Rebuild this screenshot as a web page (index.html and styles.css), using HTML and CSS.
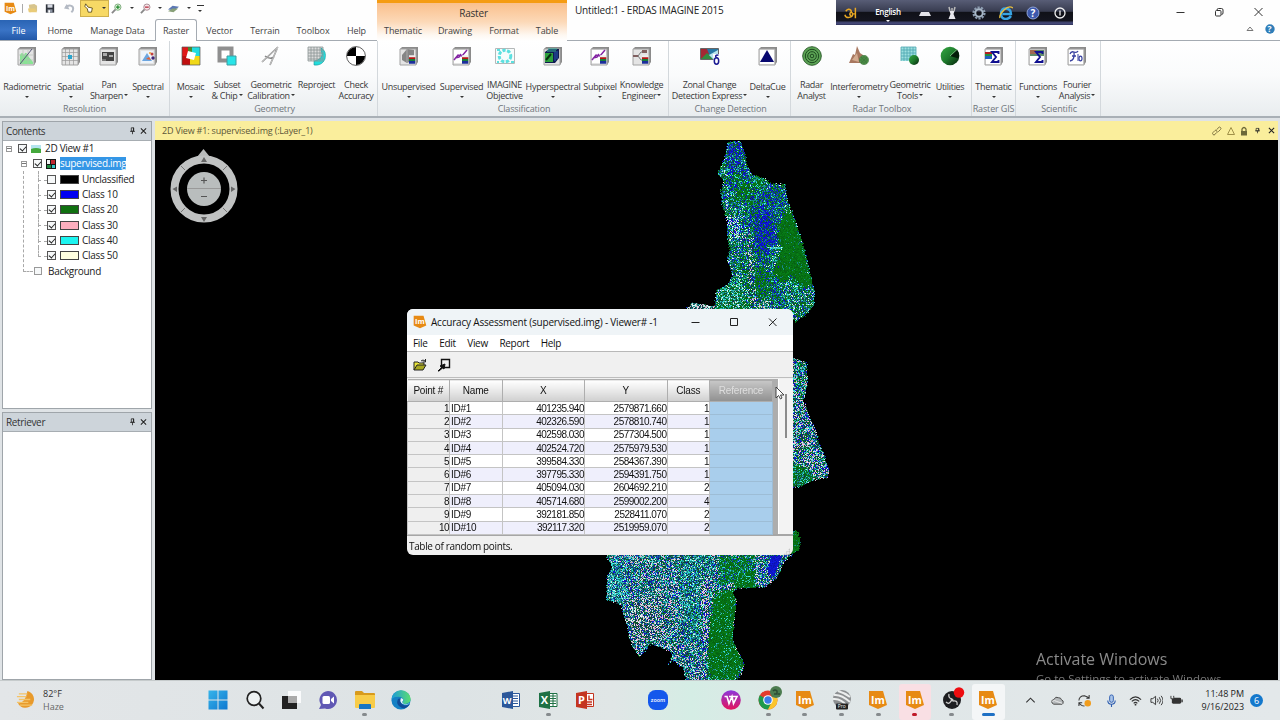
FILE: index.html
```html
<!DOCTYPE html>
<html lang="en">
<head>
    <meta charset="UTF-8">
    <meta name="viewport" content="width=device-width, initial-scale=1.0">
    <title>Untitled:1 - ERDAS IMAGINE 2015</title>
    <link rel="stylesheet" href="styles.css">
</head>
<body>

    <!-- Shared icons -->
    <svg class="sprite" width="0" height="0">
        <defs>
            <linearGradient id="blueTile" x1="0" y1="0" x2="1" y2="1"><stop offset="0" stop-color="#35b4ea"/><stop offset="1" stop-color="#0f78d0"/></linearGradient>
            <linearGradient id="edgeTop" x1="0" y1="0" x2="1" y2="0"><stop offset="0" stop-color="#1c9ad8"/><stop offset="1" stop-color="#5ade72"/></linearGradient>
            <linearGradient id="wpsFill" x1="0" y1="0" x2="0" y2="1"><stop offset="0" stop-color="#8c38dc"/><stop offset="1" stop-color="#e4145c"/></linearGradient>
            <linearGradient id="darkGreen" x1="0" y1="0" x2="1" y2="1"><stop offset="0" stop-color="#36a844"/><stop offset=".5" stop-color="#1e7a2c"/><stop offset="1" stop-color="#04200a"/></linearGradient>
        </defs>
        <symbol id="im" viewBox="0 0 20 20">
            <path d="M1 1h14l4 14-9 4-9-4z" fill="#e78a14"/>
            <text x="3" y="13.5" font-family="Open Sans, sans-serif" font-size="10.5" font-weight="bold" fill="#fff">Im</text>
        </symbol>
        <symbol id="slab" viewBox="0 0 20 20">
            <path d="M1 3l2-2h16v15l-2 3H1z" fill="#8b8b8b"/>
            <path d="M1 3h16v16H1z" fill="#e4e4e4" stroke="#a2a2a2"/>
        </symbol>
        <symbol id="rgb" viewBox="0 0 7 9">
            <path d="M0 0h7v9H0z" fill="#eee"/><path d="M0 2h7v2H0z" fill="#b51414"/><path d="M0 4h7v2H0z" fill="#18803a"/><path d="M0 6h7v3H0z" fill="#1c2e9c"/>
        </symbol>
        <symbol id="rings" viewBox="0 0 20 20">
            <circle cx="10" cy="10" r="9.3" fill="#5ca455" stroke="#315f30"/>
            <g fill="none" stroke="#1e4a20"><circle cx="10" cy="10" r="6.7"/><circle cx="10" cy="10" r="4.3"/><circle cx="10" cy="10" r="1.8"/></g>
        </symbol>
        <symbol id="pin" viewBox="0 0 8 10"><path d="M2.5 1h3v4.2h-3zM1 5.5h6M4 5.5V9" fill="none" stroke="#222"/><path d="M4.6 1h1.2v4H4.6z" fill="#222"/></symbol>
        <symbol id="x" viewBox="0 0 8 8"><path d="M1 1l6 6M7 1L1 7" fill="none" stroke="#222" stroke-width="1.2"/></symbol>
    </svg>

    <!-- Title bar and ribbon tabs -->
    <header class="titlebar">
        <div class="title-left">
            <div class="quick">
                <svg class="q-app" viewBox="0 0 20 20"><use href="#im"/></svg>
                <i class="q-sep"></i>
                <svg class="q-icon q-open" viewBox="0 0 12 12"><path d="M2 2l6-1 3 2v6l-8 1z" fill="#d7c48c"/><path d="M1 6h8l2 4H2z" fill="#e9cb78"/></svg>
                <svg class="q-icon q-save" viewBox="0 0 12 12"><path d="M1 1h10v10H1z" fill="#30343c"/><path d="M3 1h6v4H3z" fill="#d6dae2"/><path d="M3 7h6v4H3z" fill="#8c94a2"/><path d="M4 8h2v3H4z" fill="#fff"/></svg>
                <svg class="q-icon q-undo" viewBox="0 0 12 12"><path d="M2 5c3-4 8-2 8 1s-1 3-2 4" fill="none" stroke="#b4bac4" stroke-width="2.200"/><path d="M0 6l3-5 3 6z" fill="#b4bac4"/></svg>
                <span class="q-active">
                    <svg viewBox="0 0 12 12"><path d="M2 1l3 4 5 1-1 5H5L4 7 1 4z" fill="#fff" stroke="#54440c"/></svg>
                    <b class="caret"></b>
                </span>
                <svg class="q-icon q-zin" viewBox="0 0 12 12"><path d="M5 7L1 11" stroke="#888" stroke-width="2"/><circle cx="7.5" cy="4.5" r="3.4" fill="#dff2dc" stroke="#79a878"/><path d="M5.5 4.500h4M7.500 2.500v4" stroke="#208a2c" stroke-width="1.300"/></svg>
                <b class="caret"></b>
                <svg class="q-icon q-zout" viewBox="0 0 12 12"><path d="M5 7L1 11" stroke="#888" stroke-width="2"/><circle cx="7.5" cy="4.5" r="3.4" fill="#f8e4e8" stroke="#a48890"/><path d="M5.500 4.500h4" stroke="#b01c30" stroke-width="1.300"/></svg>
                <b class="caret"></b>
                <svg class="q-icon q-layer" viewBox="0 0 12 12"><path d="M0 7l5-4 7 1-5 4z" fill="#5c78b4"/><path d="M0 9l5-3 6 0-5 4z" fill="#88a078"/></svg>
                <b class="caret"></b>
                <span class="q-more"><b class="caret"></b></span>
            </div>
            <nav class="tabs">
                <a class="tab file">File</a>
                <a class="tab">Home</a>
                <a class="tab manage">Manage Data</a>
                <a class="tab active">Raster</a>
                <a class="tab">Vector</a>
                <a class="tab">Terrain</a>
                <a class="tab">Toolbox</a>
                <a class="tab">Help</a>
            </nav>
        </div>
        <div class="context">
            <div class="context-name">Raster</div>
            <nav class="context-tabs">
                <a class="tab">Thematic</a>
                <a class="tab">Drawing</a>
                <a class="tab">Format</a>
                <a class="tab">Table</a>
            </nav>
        </div>
        <div class="title-right">
            <span class="app-title">Untitled:1 - ERDAS IMAGINE 2015</span>
            <div class="win-side">
                <svg class="win-buttons" viewBox="0 0 100 20"><g fill="none" stroke="#333"><path d="M6.500 12.500h8M84.500 8l8 8M92.500 8l-8 8"/><rect x="45.500" y="10.500" width="5.500" height="5.500" rx="1"/><path d="M47 10q0-1.500 1.500-1.500h3q1.500 0 1.500 1.500v3q0 1.500-1.500 1.500"/></g></svg>
                <svg class="help-buttons" viewBox="0 0 40 20"><path d="M7 10.500l3-3.500 3 3.500z" fill="#fff" stroke="#777"/><circle cx="30" cy="9" r="4.700" fill="#2f7db8"/><text x="27.600" y="12.200" font-family="Open Sans" font-weight="bold" font-size="8.500" fill="#fff">?</text></svg>
            </div>
        </div>
    </header>

    <!-- Floating keyboard bar -->
    <div class="langbar">
        <svg class="l-logo" viewBox="0 0 16 16"><path d="M1 10q1 4 5 3 4-1 4-4-1-3-3-1-1 2 1 3M2 6q3-4 6-1 1 2-1 3M13 2v12M10 9h3" fill="none" stroke="#e8a824" stroke-width="1.700"/></svg>
        <span class="l-name">English<b class="caret"></b></span>
        <svg viewBox="0 0 14 14"><path d="M3 6h8l2 4H1z" fill="#e4e4ea"/></svg>
        <svg viewBox="0 0 14 14"><path d="M4.500 5h5l-1 3 2 5h-7l2-5z" fill="#e8e8ee"/><path d="M5 5L4 1M7 5V2M9 5l1-4" stroke="#bbb" stroke-width="1.500"/></svg>
        <svg viewBox="0 0 14 14"><circle cx="7" cy="7" r="5.500" fill="none" stroke="#8c9cb0" stroke-width="2.200" stroke-dasharray="2.200 1.200"/><circle cx="7" cy="7" r="3.700" fill="none" stroke="#a8b8c8" stroke-width="2"/></svg>
        <svg viewBox="0 0 14 14"><path d="M12 10q-2 3-5 3-5 0-5-5.500T7 2.500t5 5.500H3.500" fill="none" stroke="#38a4e4" stroke-width="2.400"/><path d="M1 12Q0 9 5 4t9-2" fill="none" stroke="#e8c040" stroke-width="1.400"/></svg>
        <svg viewBox="0 0 14 14"><circle cx="7" cy="7" r="6" fill="#3c58ac" stroke="#8ea2d6"/><text x="4.500" y="10.700" font-family="Open Sans" font-size="10" font-weight="bold" fill="#fff">?</text></svg>
        <svg viewBox="0 0 14 14"><circle cx="7" cy="7" r="5" fill="none" stroke="#f0f0f0" stroke-width="1.300"/><path d="M7 4.500v5" stroke="#f0f0f0" stroke-width="1.300"/></svg>
    </div>

    <!-- Ribbon -->
    <section class="ribbon">
        <div class="group resolution">
            <div class="tools">
                <div class="tool one"><svg viewBox="0 0 20 20"><use href="#slab"/><path d="M3 18V9q2-4 4 0 2-5 4 1l5 6v2z" fill="#88e494"/><path d="M6 4v14M11 4v14M2 9h14M2 14h14" stroke="#b4bcb4" stroke-width=".6"/><path d="M3 18L15 3" stroke="#557" /></svg><span>Radiometric</span><b class="caret"></b></div>
                <div class="tool one"><svg viewBox="0 0 20 20"><use href="#slab"/><path d="M4.500 3v16M8.500 3v16M12.500 3v16M1 6.500h16M1 10.500h16M1 14.500h16" stroke="#999" stroke-width=".7"/><path d="M7 9h4v4H7z" fill="#2aa4cc"/></svg><span>Spatial</span><b class="caret"></b></div>
                <div class="tool"><svg viewBox="0 0 20 20"><use href="#slab"/><path d="M3 6h12v9H3z" fill="#444"/><path d="M4 7h4v3H4zM10 9h4v2h-4z" fill="#aaa"/><path d="M3 13h4v2H3z" fill="#777"/></svg><span>Pan</span><span>Sharpen<b class="caret"></b></span></div>
                <div class="tool one"><svg viewBox="0 0 20 20"><use href="#slab"/><path d="M3 5h12v12H3z" fill="#eef4fb"/><path d="M4 15l5-8 5 8z" fill="#6ca6e0"/><path d="M8 13l3-2 2 3z" fill="#e86030"/><circle cx="14" cy="8" r="1.500" fill="#c04040"/><circle cx="15" cy="12" r="1.700" fill="#402878"/><circle cx="12" cy="7" r="1" fill="#f0a030"/></svg><span>Spectral</span><b class="caret"></b></div>
            </div>
            <div class="group-name">Resolution</div>
        </div>
        <div class="group geometry">
            <div class="tools">
                <div class="tool one"><svg viewBox="0 0 20 20"><path d="M1 1h10v9H1z" fill="#e01818"/><path d="M11 1h8v9h-8z" fill="#20dce0"/><path d="M1 10h8v9H1z" fill="#c01010"/><path d="M9 10h10v9H9z" fill="#f0d818"/><path d="M7 1h4v5H7z" fill="#4c8c2c"/><path d="M7 5l8 2-2 7-8-2z" fill="#fff"/><path d="M1 1h18v18H1z" fill="none" stroke="#555" stroke-width=".7"/></svg><span>Mosaic</span><b class="caret"></b></div>
                <div class="tool"><svg viewBox="0 0 20 20"><path d="M2.500 2.500h12v12h-12z" fill="#fff" stroke="#8f8f8f" stroke-width="4"/><path d="M10 10h9v9h-9z" fill="#28e4e8" stroke="#3e9ca0"/></svg><span>Subset</span><span>&amp; Chip<b class="caret"></b></span></div>
                <div class="tool"><svg viewBox="0 0 20 20"><path d="M17 1L1 16M16 3L9 19M4 10q5 4 9 1" fill="none" stroke="#888" stroke-width="1.600"/><path d="M17 1L1 16M16 3L9 19" stroke="#e8e8e8" stroke-width=".6"/></svg><span>Geometric</span><span>Calibration<b class="caret"></b></span></div>
                <div class="tool"><svg viewBox="0 0 20 20"><path d="M1 1h15v14H1z" fill="#ddd"/><path d="M14 2q6 3 4 11-3 7-11 6l0-4q7-1 8-6z" fill="#22dcdc" stroke="#189898" stroke-width=".6"/><path d="M1 1v14M4 1v14M7 1v14M10 1v14M13 1v14M16 1v14M1 1h15M1 4h15M1 7h15M1 10h15M1 13h15M1 15h15" stroke="#8c9494" stroke-width=".8"/></svg><span>Reproject</span></div>
                <div class="tool"><svg viewBox="0 0 20 20"><circle cx="10" cy="10" r="9.400" fill="#fff" stroke="#333" stroke-width=".8"/><path d="M10 10V1a9 9 0 0 0-9 9zM10 10v9a9 9 0 0 0 9-9z" fill="#000"/></svg><span>Check</span><span>Accuracy</span></div>
            </div>
            <div class="group-name">Geometry</div>
        </div>
        <div class="group classification">
            <div class="tools">
                <div class="tool one"><svg viewBox="0 0 20 20"><use href="#slab"/><path d="M3 9l5-6 7 1v10l-7 3-5-3z" fill="#858585"/><path d="M8 3v14" stroke="#aaa"/><use href="#rgb" x="10" y="9" width="6.500" height="9"/></svg><span>Unsupervised</span><b class="caret"></b></div>
                <div class="tool one"><svg viewBox="0 0 20 20"><use href="#slab"/><path d="M2 4h14v13H2z" fill="#fff"/><path d="M2 14l4-5 4 1 5-6M3 12l4-1 2-3" fill="none" stroke="#8424a4" stroke-width="1.500"/><use href="#rgb" x="10" y="9" width="6.500" height="9"/></svg><span>Supervised</span><b class="caret"></b></div>
                <div class="tool"><svg viewBox="0 0 20 20"><path d="M.5 2.500h19v15H.5z" fill="#f7fcfc" stroke="#b4b8b8"/><circle cx="10" cy="10" r="5.800" fill="none" stroke="#5ce0e0" stroke-width="3" stroke-dasharray="3.300 1.500"/><path d="M2 4h3M2 16h2M16 16h3" stroke="#5ce0e0" stroke-width="2"/></svg><span>IMAGINE</span><span>Objective</span></div>
                <div class="tool one"><svg viewBox="0 0 20 20"><use href="#slab"/><path d="M2 6l4-3h10v9l-4 5H2z" fill="#101c50"/><path d="M2 7h8v9H2z" fill="#2ca03c"/><path d="M4 5h9M5 3h9" stroke="#38b4a0"/><path d="M12 6v9M14 5v8" stroke="#2858b8"/><path d="M3 14l5-6" stroke="#083010" stroke-width="2"/></svg><span>Hyperspectral</span><b class="caret"></b></div>
                <div class="tool one"><svg viewBox="0 0 20 20"><use href="#slab"/><path d="M2 4h14v13H2z" fill="#fff"/><path d="M2 14l4-5 4 1 5-6M3 12l4-1 2-3" fill="none" stroke="#8424a4" stroke-width="1.500"/><use href="#rgb" x="10" y="9" width="6.500" height="9"/></svg><span>Subpixel</span><b class="caret"></b></div>
                <div class="tool"><svg viewBox="0 0 20 20"><use href="#slab"/><path d="M2 10h4l3-4h5M6 10l3 4h3" fill="none" stroke="#777"/><path d="M1 9h5v2H1zM10 4h5v3h-5z" fill="#806060"/><use href="#rgb" x="10" y="9" width="6.500" height="9"/></svg><span>Knowledge</span><span>Engineer<b class="caret"></b></span></div>
            </div>
            <div class="group-name">Classification</div>
        </div>
        <div class="group change">
            <div class="tools">
                <div class="tool"><svg viewBox="0 0 20 20"><path d="M.5 2.500h18v11H.5z" fill="#2878a4" stroke="#666"/><path d="M1 3h6l2 5-8 5z" fill="#a42834"/><path d="M1 13l6-6 6 6z" fill="#308c40"/><path d="M9 9l9-5v4l-5 5z" fill="#b8e4ec"/><path d="M13 8h6v11h-5z" fill="#fff"/><path d="M18.500 9q-5 0-1.500 3" fill="none" stroke="#1c1c94" stroke-width="1.500"/><ellipse cx="16.500" cy="15" rx="2.200" ry="3.200" fill="none" stroke="#1c1c94" stroke-width="1.500"/></svg><span>Zonal Change</span><span>Detection Express<b class="caret"></b></span></div>
                <div class="tool one"><svg viewBox="0 0 20 20"><use href="#slab"/><path d="M2 4h14v14H2z" fill="#fff"/><path d="M2 16L9 4l7 12z" fill="#080870"/></svg><span>DeltaCue</span><b class="caret"></b></div>
            </div>
            <div class="group-name">Change Detection</div>
        </div>
        <div class="group radar">
            <div class="tools">
                <div class="tool"><svg viewBox="0 0 20 20"><use href="#rings"/></svg><span>Radar</span><span>Analyst</span></div>
                <div class="tool one"><svg viewBox="0 0 20 20"><path d="M0 17L4 8l2 1 2-9 3 7 3 2 3 8z" fill="#a87860"/><path d="M3 14l5-7 2 9z" fill="#d4ac90"/><use href="#rings" x="10" y="9" width="10" height="10"/></svg><span>Interferometry</span><b class="caret"></b></div>
                <div class="tool"><svg viewBox="0 0 20 20"><path d="M1 1h15v14H1z" fill="#9ee0e0"/><path d="M1 1v14M4 1v14M7 1v14M10 1v14M13 1v14M16 1v14M1 1h15M1 4h15M1 7h15M1 10h15M1 13h15" stroke="#4ca4b0" stroke-width=".8"/><circle cx="14" cy="14" r="5" fill="url(#darkGreen)"/></svg><span>Geometric</span><span>Tools<b class="caret"></b></span></div>
                <div class="tool one"><svg viewBox="0 0 20 20"><circle cx="10" cy="10" r="9.300" fill="url(#darkGreen)"/><path d="M10 10l7-6.500a9.300 9.300 0 0 1 1.500 9z" fill="#041c08"/><path d="M10 10l7-6.500" stroke="#8cd890" stroke-width=".8"/></svg><span>Utilities</span><b class="caret"></b></div>
            </div>
            <div class="group-name">Radar Toolbox</div>
        </div>
        <div class="group gis">
            <div class="tools">
                <div class="tool one"><svg viewBox="0 0 20 20"><use href="#slab"/><path d="M2 4h14v14H2z" fill="#fff"/><path d="M1 6h7v2H1z" fill="#b42020"/><path d="M1 8h7v2H1z" fill="#209040"/><path d="M1 10h7v3H1z" fill="#2060c0"/><path d="M14.500 8V6H8l4 5-4 5h6.500v-2" fill="none" stroke="#101090" stroke-width="1.900"/></svg><span>Thematic</span><b class="caret"></b></div>
            </div>
            <div class="group-name">Raster GIS</div>
        </div>
        <div class="group scientific">
            <div class="tools">
                <div class="tool one"><svg viewBox="0 0 20 20"><use href="#slab"/><path d="M2 4h14v14H2z" fill="#fff"/><path d="M2 4h14v6H2z" fill="#608c68"/><path d="M2 4h6v4H2z" fill="#a06850"/><path d="M14.500 8V6H8l4 5-4 5h6.500v-2" fill="none" stroke="#101090" stroke-width="1.900"/></svg><span>Functions</span><b class="caret"></b></div>
                <div class="tool"><svg viewBox="0 0 20 20"><use href="#slab"/><path d="M2 4h14v14H2z" fill="#fff"/><path d="M3 8q1-3 4-2t4-1M7 6q1 8-4 9M5 10h4" fill="none" stroke="#3840a0" stroke-width="1.300"/><path d="M11 8v7" stroke="#3840a0"/><ellipse cx="13.500" cy="12.500" rx="1.500" ry="2.300" fill="none" stroke="#3840a0" stroke-width="1.200"/></svg><span>Fourier</span><span>Analysis<b class="caret"></b></span></div>
            </div>
            <div class="group-name">Scientific</div>
        </div>
    </section>

    <!-- Work area -->
    <main class="workspace">
        <aside class="side">
            <section class="panel contents">
                <div class="panel-head"><span>Contents</span><svg viewBox="0 0 8 10"><use href="#pin"/></svg><svg viewBox="0 0 8 8"><use href="#x"/></svg></div>
                <div class="tree">
                    <div class="row lv0"><i class="exp"></i><i class="check on"></i><svg class="node" viewBox="0 0 10 10"><path d="M0 1h10v8H0z" fill="#b4e4ee"/><path d="M0 5q5-2 10 0v4H0z" fill="#44a83c"/></svg><span>2D View #1</span></div>
                    <div class="row lv1"><i class="exp"></i><i class="check on"></i><svg class="node" viewBox="0 0 10 10"><path d="M0 0h10v10H0z" fill="#161616"/><path d="M1 1h3v4H1z" fill="#f4f4f4"/><path d="M5 1h4v4H5z" fill="#c02830"/><path d="M1 6h4v3H1z" fill="#208c40"/><path d="M6 6h3v3H6z" fill="#38c8c8"/></svg><span class="selected">supervised.img</span></div>
                    <div class="row lv2"><i class="check"></i><i class="swatch black"></i><span>Unclassified</span></div>
                    <div class="row lv2"><i class="check on"></i><i class="swatch blue"></i><span>Class 10</span></div>
                    <div class="row lv2"><i class="check on"></i><i class="swatch green"></i><span>Class 20</span></div>
                    <div class="row lv2"><i class="check on"></i><i class="swatch pink"></i><span>Class 30</span></div>
                    <div class="row lv2"><i class="check on"></i><i class="swatch cyan"></i><span>Class 40</span></div>
                    <div class="row lv2 last"><i class="check on"></i><i class="swatch cream"></i><span>Class 50</span></div>
                    <div class="row bg"><i class="check"></i><span>Background</span></div>
                </div>
            </section>
            <section class="panel retriever">
                <div class="panel-head"><span>Retriever</span><svg viewBox="0 0 8 10"><use href="#pin"/></svg><svg viewBox="0 0 8 8"><use href="#x"/></svg></div>
                <div class="blank"></div>
            </section>
        </aside>

        <section class="viewer">
            <div class="viewer-head">
                <span>2D View #1: supervised.img (:Layer_1)</span>
                <svg viewBox="0 0 10 10"><path d="M4.500 6.500L3 8.500q-1 1-2 0t0-2l2-2q1-1 2 0M5 3.500l1.500-2q1-1 2 0t0 2l-2 2q-1 1-2 0" fill="none" stroke="#807440"/></svg>
                <svg viewBox="0 0 10 10"><path d="M1.500 8.500L5 1.500l3.500 7z" fill="none" stroke="#a09048"/></svg>
                <svg viewBox="0 0 10 10"><path d="M2 5h6v4.500H2z" fill="#6c6838"/><path d="M3 5V3q2-3 4 0v2" fill="none" stroke="#6c6838" stroke-width="1.300"/></svg>
                <svg class="v-small" viewBox="0 0 10 10"><path d="M3 2h4v3.500H3zM1.500 5.500h7M5 5.500V9M6.500 2v3" fill="none" stroke="#222"/></svg>
                <svg class="v-small" viewBox="0 0 8 8"><use href="#x"/></svg>
            </div>
            <div class="view">
                <canvas id="map" width="1123" height="540"></canvas>
                <svg class="compass" viewBox="0 0 70 76">
                    <path d="M28 9l6.500-8L41 9z" fill="#b8baba"/>
                    <circle cx="35" cy="41" r="29.500" fill="none" stroke="#c0c2c2" stroke-width="8"/>
                    <circle cx="35" cy="41" r="17" fill="#b9bdbd"/>
                    <path d="M18 40.500h34" stroke="#999" />
                    <path d="M32 32.500h6M35 29.500v6M32 48.500h6" stroke="#555" stroke-width="1.200"/>
                    <path d="M32 14l3-5 3 5zM32 69l3 5 3-5zM8 38.500L3.500 41l4.500 3zM62 38.500l4.500 2.500-4.500 3z" fill="#666"/>
                    <path d="M12 18l4 4M58 18l-4 4M12 64l4-4M58 64l-4-4" stroke="#777"/>
                </svg>
                <div class="activate">
                    <div>Activate Windows</div>
                    <p>Go to Settings to activate Windows.</p>
                </div>
            </div>
        </section>
    </main>

    <!-- Accuracy Assessment window -->
    <div class="dialog">
        <div class="dlg-title">
            <svg class="dlg-app" viewBox="0 0 20 20"><use href="#im"/></svg>
            <span>Accuracy Assessment (supervised.img) - Viewer# -1</span>
            <svg class="dlg-buttons" viewBox="0 0 90 20"><path d="M1.500 10.500h8M40.500 6.500h7v7h-7zM79 6.500l7.500 7.500M86.500 6.500L79 14" fill="none" stroke="#222"/></svg>
        </div>
        <div class="dlg-menu"><span>File</span><span>Edit</span><span>View</span><span>Report</span><span>Help</span></div>
        <div class="dlg-tools">
            <svg viewBox="0 0 14 14"><path d="M1 12V4h4l1 1h5v2" fill="#e8e43c" stroke="#222"/><path d="M1 12l3-5h9l-3 5z" fill="#a8a820" stroke="#222"/><path d="M8 3q2-2 4 0M12.500 1v3h-3" fill="none" stroke="#222"/></svg>
            <svg viewBox="0 0 14 14"><path d="M4.500 1.500h8v8h-8z" fill="none" stroke="#111" stroke-width="1.400"/><path d="M1 13l4-4-2-1 5-2-1 5-1.500-1L2 13z" fill="#111" stroke="#111"/></svg>
        </div>
        <div class="dlg-body">
            <table>
                <thead><tr><th class="c-pt">Point #</th><th class="c-name">Name</th><th class="c-x">X</th><th class="c-y">Y</th><th class="c-class">Class</th><th class="c-ref">Reference</th></tr></thead>
                <tbody>
                    <tr><td>1</td><td>ID#1</td><td>401235.940</td><td>2579871.660</td><td>1</td><td></td></tr>
                    <tr><td>2</td><td>ID#2</td><td>402326.590</td><td>2578810.740</td><td>1</td><td></td></tr>
                    <tr><td>3</td><td>ID#3</td><td>402598.030</td><td>2577304.500</td><td>1</td><td></td></tr>
                    <tr><td>4</td><td>ID#4</td><td>402524.720</td><td>2575979.530</td><td>1</td><td></td></tr>
                    <tr><td>5</td><td>ID#5</td><td>399584.330</td><td>2584367.390</td><td>1</td><td></td></tr>
                    <tr><td>6</td><td>ID#6</td><td>397795.330</td><td>2594391.750</td><td>1</td><td></td></tr>
                    <tr><td>7</td><td>ID#7</td><td>405094.030</td><td>2604692.210</td><td>2</td><td></td></tr>
                    <tr><td>8</td><td>ID#8</td><td>405714.680</td><td>2599002.200</td><td>4</td><td></td></tr>
                    <tr><td>9</td><td>ID#9</td><td>392181.850</td><td>2528411.070</td><td>2</td><td></td></tr>
                    <tr><td>10</td><td>ID#10</td><td>392117.320</td><td>2519959.070</td><td>2</td><td></td></tr>
                </tbody>
            </table>
            <div class="table-edge"></div>
            <div class="scroll"><i></i></div>
        </div>
        <div class="dlg-status"><span>Table of random points.</span><i class="grip"></i></div>
    </div>
    <svg class="cursor" viewBox="0 0 10 14"><path d="M1 1v11l2.500-2.500L5.500 13l1.500-1-1.500-3H9z" fill="#fff" stroke="#333" stroke-width=".9"/></svg>

    <!-- Taskbar -->
    <footer class="taskbar">
        <div class="weather">
            <svg viewBox="0 0 20 20"><path d="M12 1a9 9 0 1 1-10 13q8 0 10-13z" fill="#e89a2c"/><path d="M3 4h9M1 7h10M3 10h12M1 13h12M4 16h13" stroke="#f4c468" stroke-width="1.400"/></svg>
            <div><span>82°F</span><span class="haze">Haze</span></div>
        </div>
        <div class="apps">
            <div class="app"><svg viewBox="0 0 20 20"><path d="M.5.500h9v9h-9zM10.500.500h9v9h-9zM.5 10.500h9v9h-9zM10.500 10.500h9v9h-9z" fill="url(#blueTile)"/></svg></div>
            <div class="app"><svg viewBox="0 0 20 20"><circle cx="9" cy="8.500" r="6.800" fill="#eef2f3" stroke="#222" stroke-width="1.700"/><path d="M14 13.500l4.500 5" stroke="#222" stroke-width="2"/></svg></div>
            <div class="app"><svg viewBox="0 0 20 20"><path d="M1 6h15v13H1z" fill="#222"/><path d="M7 1h13v12H7z" fill="#fff" opacity=".85"/><path d="M7 6h9v7H7z" fill="#aaa"/></svg></div>
            <div class="app"><svg viewBox="0 0 20 20"><path d="M10 1a9 9 0 1 1-3 17.500L1 19l2-4A9 9 0 0 1 10 1z" fill="#6058b4"/><rect x="4.500" y="6" width="7.500" height="8" rx="1.500" fill="#fff"/><path d="M13 9l3-2.500v7L13 11z" fill="#fff"/></svg></div>
            <div class="app run"><svg viewBox="0 0 20 20"><path d="M0 2q0-1 1-1h6l2 2h10q1 0 1 1v13H0z" fill="#d89a1c"/><path d="M0 5h20v12q0 1-1 1H1q-1 0-1-1z" fill="#f8cc48"/><path d="M4 19v-4q0-1 1-1h10q1 0 1 1v4z" fill="#1876c4"/></svg></div>
            <div class="app"><svg viewBox="0 0 20 20"><circle cx="10" cy="10" r="9.600" fill="#1480c4"/><path d="M.500 9A9.600 9.600 0 0 1 19.500 8q1 5-5 6-3 0-3-2 2-2 0-4T4 7z" fill="url(#edgeTop)"/><path d="M7 9q-3 6 4 9 5 1 8-4-5 3-8 0t-1-5q-2-1-3 0z" fill="#104c98"/><path d="M10 8q4 1 1 4 2 4 8 1-3 3-7 1t-2-6z" fill="#e8f4fa"/></svg></div>
            <div class="app word"><svg viewBox="0 0 20 20"><path d="M10 3.500h8.500v13H10z" fill="#fff" stroke="#2b579a"/><path d="M12 6h5M12 8.500h5M12 11h5M12 13.500h5" stroke="#2b579a"/><path d="M1 3l11-2v18L1 17z" fill="#2b579a"/><text x="1.800" y="13.500" font-family="Open Sans" font-size="9" font-weight="bold" fill="#fff">W</text></svg></div>
            <div class="app run"><svg viewBox="0 0 20 20"><path d="M10 3.500h9v13h-9z" fill="#fff" stroke="#1e7145"/><path d="M12 6h6M12 8.500h6M12 11h6M12 13.500h6M15 4v12" stroke="#1e7145"/><path d="M1 3l11-2v18L1 17z" fill="#1e7145"/><text x="2.800" y="14" font-family="Open Sans" font-size="11" font-weight="bold" fill="#fff">X</text></svg></div>
            <div class="app"><svg viewBox="0 0 20 20"><path d="M10 3.500h8.500v13H10z" fill="#fff" stroke="#c43520"/><path d="M12 12h5M12 14.500h5M14 5.500v4h3.500" fill="none" stroke="#c43520" stroke-width="1.400"/><path d="M1 3l11-2v18L1 17z" fill="#c43520"/><text x="3" y="14" font-family="Open Sans" font-size="11" font-weight="bold" fill="#fff">P</text></svg></div>
            <div class="app zoom"><svg viewBox="0 0 20 20"><rect x="0" y="0" width="20" height="20" rx="7.500" fill="#1458ec"/><text x="2.800" y="11.800" font-family="Open Sans" font-size="5.400" font-weight="600" fill="#fff">zoom</text></svg></div>
            <div class="app wps"><svg viewBox="0 0 20 20"><circle cx="10" cy="10" r="9.800" fill="url(#wpsFill)"/><path d="M3.500 6.500H6l2 7 3-7 1.500 7L16 6.500h-5M8 6.500h3" fill="none" stroke="#fff" stroke-width="1.600"/></svg></div>
            <div class="app run"><svg class="wide" viewBox="0 0 24 24"><circle cx="10" cy="14" r="9.500" fill="#e33b2e"/><path d="M10 14L1.800 9.300A9.500 9.500 0 0 0 10 23.500l4-7z" fill="#1f9a4c"/><path d="M10 14h9.500a9.500 9.500 0 0 1-9.500 9.500l4-8z" fill="#fbc52c"/><path d="M14 10h4.600a9.500 9.500 0 0 1 .9 4l-5 2z" fill="#fbc52c"/><circle cx="10" cy="14" r="4.800" fill="#fff"/><circle cx="10" cy="14" r="3.700" fill="#3c7ce8"/><circle cx="18" cy="6" r="6" fill="#4c7c50"/><path d="M15 5q2-2 4 0v3h-3M20 8h2" fill="none" stroke="#2c4c34" stroke-width="1.500"/></svg></div>
            <div class="app run"><svg viewBox="0 0 20 20"><use href="#im"/></svg></div>
            <div class="app run"><svg viewBox="0 0 20 20"><circle cx="10" cy="9" r="9" fill="#8c8f91"/><path d="M2 5q7-1 16 7M1 9q8-1 14 7M6 1q7 2 12 6" fill="none" stroke="#eceeee" stroke-width="2"/><rect x="4" y="13.500" width="12" height="6" rx="1" fill="#222"/><text x="5.800" y="18.200" font-family="Open Sans" font-size="5" fill="#eee">Pro</text></svg></div>
            <div class="app run"><svg viewBox="0 0 20 20"><use href="#im"/></svg></div>
            <div class="app run alert"><svg viewBox="0 0 20 20"><use href="#im"/></svg></div>
            <div class="app run"><svg class="wide" viewBox="0 0 24 24"><circle cx="10" cy="14" r="9" fill="#1c1d20"/><path d="M10 13q-4-1-3-5M11 15q5-1 4 4M9 15q-2 4-5 1" fill="none" stroke="#ccc" stroke-width="1.300"/><circle cx="10" cy="14" r="1.500" fill="#ccc"/><circle cx="17" cy="6.500" r="5.200" fill="#ee0c10"/></svg></div>
            <div class="app run current"><svg viewBox="0 0 20 20"><use href="#im"/></svg></div>
        </div>
        <div class="tray">
            <svg viewBox="0 0 14 14"><path d="M2.500 9L7 4.500 11.500 9" fill="none" stroke="#333" stroke-width="1.200"/></svg>
            <svg viewBox="0 0 14 14"><path d="M3 11q-3-1-2-4l2-1q2-4 5-2 3 0 3 2 3 1 2 4l-1 1z" fill="#b6babc" stroke="#444"/><path d="M1 8q3-2 5 0l6 2" fill="none" stroke="#eee"/></svg>
            <svg viewBox="0 0 14 14"><path d="M1 7q0-5 6-5l5 2M12 1v3.500H9M1 9q2 4 6 4M1 13V9.500h3.500" fill="none" stroke="#333" stroke-width="1.100"/><circle cx="10.500" cy="10" r="3.500" fill="#f09c1c"/></svg>
            <svg viewBox="0 0 14 14"><rect x="5" y="1" width="4" height="8" rx="2" fill="#a9c4e8" stroke="#2c5cb0"/><path d="M3 7q0 4 4 4t4-4M7 11v3" fill="none" stroke="#2c5cb0" stroke-width="1.200"/></svg>
            <svg viewBox="0 0 14 14"><path d="M1 6q6-6 12 0M3 8q4-4 8 0M5 10q2-2 4 0" fill="none" stroke="#333" stroke-width="1.200"/><circle cx="7" cy="11.500" r="1" fill="#333"/></svg>
            <svg viewBox="0 0 14 14"><path d="M1 5h2l3-2.500v9L3 9H1zM8 5q1.500 2 0 4M10 3.500q3 3.500 0 7M12 2q4 5 0 10" fill="none" stroke="#333"/></svg>
            <svg viewBox="0 0 14 14"><rect x="2" y="4" width="10" height="6.500" rx="1.500" fill="#333"/><path d="M13 6v3" stroke="#333" stroke-width="1.500"/><path d="M1 2v3q2 1 3-1V2" fill="#e4e8ea" stroke="#333"/></svg>
        </div>
        <div class="clock"><span>11:48 PM</span><span>9/16/2023</span></div>
        <span class="count">6</span>
    </footer>

    <script src="map.js"></script>
</body>
</html>
```
FILE: styles.css
```css
/* Base */
* {
    box-sizing: border-box;
}

body {
    margin: 0;
    width: 1280px;
    height: 720px;
    overflow: hidden;
    position: relative;
    display: flex;
    flex-direction: column;
    background-color: #dfe3e6;
    color: #333;
    font-family: "Open Sans", "Noto Sans", sans-serif;
    font-size: 9px;
}

svg {
    display: block;
    flex: none;
}

.sprite {
    position: absolute;
}

.caret {
    display: inline-block;
    border: 2px solid transparent;
    border-top-color: #333;
    border-bottom: 0;
}

/* Title bar */
.titlebar {
    display: grid;
    grid-template-columns: 377px 190px 1fr;
    height: 41px;
    flex: none;
    background-color: #fefefe;
    border-bottom: 1px solid #a5abb2;
}

.quick {
    display: flex;
    align-items: center;
    height: 16px;
    padding-left: 4px;
}

.q-app {
    width: 13px;
    height: 13px;
}

.q-sep {
    height: 9px;
    border-left: 1px solid #aaa;
    margin: 0 4px 0 5px;
}

.q-icon {
    width: 11px;
    height: 11px;
}

.q-save {
    margin-left: 7px;
    width: 10px;
}

.q-undo {
    margin: 0 5px 0 9px;
}

.q-active {
    display: flex;
    align-items: center;
    gap: 8px;
    width: 29px;
    height: 17px;
    padding-left: 3px;
    background-color: #f7d965;
    border: 1px solid #cfb04c;
}

.q-active svg {
    width: 10px;
    height: 10px;
}

.q-zin {
    margin: 0 8px 0 2px;
}

.q-zout {
    margin: 0 7px 0 6px;
}

.q-layer {
    margin: 0 8px 0 6px;
}

.q-more {
    margin-left: 6px;
    width: 7px;
    padding-left: 1px;
    border-top: 1px solid #333;
    line-height: 4px;
    padding-top: 1px;
}

.tabs {
    display: grid;
    grid-template-columns: 37px 46px 72px 42px 45px 46px 50px 37px;
    margin-top: 4px;
}

.tab {
    height: 21px;
    line-height: 21px;
    text-align: center;
    white-space: nowrap;
    color: #444;
    letter-spacing: -0.1px;
}

.tab.file {
    height: 20px;
    background: linear-gradient(#2a64b4, #3a74c6 50%, #2258a8);
    color: #fff;
}

.tab.manage {
    padding-right: 3px;
}

.tab.active {
    margin-top: -1px;
    background-color: #fff;
    border: 1px solid #a5abb2;
    border-bottom: 0;
    border-radius: 3px 3px 0 0;
    height: 22px;
}

.context {
    border-top: 3px solid #f59c12;
    background: linear-gradient(#fac08c, #fcd9b8 50%, #fef8f2 85%, #fff);
    display: flex;
    flex-direction: column;
}

.context-name {
    height: 17px;
    line-height: 20px;
    padding-left: 3px;
    text-align: center;
    font-size: 10px;
    letter-spacing: -0.2px;
}

.context-tabs {
    display: grid;
    grid-template-columns: 52px 52px 46px 40px;
}

.title-right {
    display: flex;
    justify-content: space-between;
}

.app-title {
    padding: 3px 0 0 8px;
    font-size: 10px;
    line-height: 14px;
    letter-spacing: -0.18px;
    white-space: nowrap;
    color: #222;
}

.win-side {
    display: flex;
    flex-direction: column;
    align-items: flex-end;
    padding-right: 10px;
}

.win-buttons {
    width: 100px;
    height: 20px;
}

.win-side .help-buttons {
    width: 40px;
    height: 20px;
    margin-right: -10px;
}

/* Keyboard bar lies over the title */
.langbar {
    position: absolute;
    left: 836px;
    top: 0;
    width: 237px;
    height: 25px;
    display: flex;
    align-items: center;
    padding-left: 8px;
    gap: 13px;
    color: #fff;
    background: linear-gradient(#585d76, #383c50 45%, #101118 50%, #14151f 82%, #4a4e80 92%, #30335a);
}

.langbar svg {
    width: 14px;
    height: 14px;
}

.l-name {
    display: flex;
    flex-direction: column;
    align-items: center;
    line-height: 12px;
    padding-top: 2px;
    width: 28px;
    margin-left: 3px;
    font-size: 8px;
    font-weight: 600;
    letter-spacing: -0.25px;
}

.l-name .caret {
    border-top-color: #fff;
    margin-top: 2px;
}

.l-name + svg {
    margin-left: 3px;
}

/* Ribbon */
.ribbon {
    display: flex;
    height: 77px;
    flex: none;
    letter-spacing: -0.3px;
    background: linear-gradient(#fff, #fafbfc 45%, #e9edef);
    border-bottom: 2px solid #a9b0b6;
}

.group {
    display: flex;
    flex-direction: column;
    justify-content: space-between;
    border-right: 1px solid #d3d8dc;
    padding-left: 2px;
}

.tools {
    display: grid;
    height: 60px;
    padding-top: 5px;
}

.resolution {
    width: 170px;
    padding-left: 0;
}

.resolution .tools {
    grid-template-columns: 54px 33px 44px 34px;
}

.geometry {
    width: 208px;
}

.geometry .tools {
    grid-template-columns: 37px 36px 52px 39px 40px;
}

.classification {
    width: 291px;
}

.classification .tools {
    grid-template-columns: 57px 49px 37px 60px 34px 49px;
}

.change {
    width: 122px;
}

.change .tools {
    grid-template-columns: 77px 39px;
}

.radar {
    width: 181px;
}

.radar .tools {
    grid-template-columns: 37px 58px 44px 36px;
}

.gis {
    width: 44px;
    padding-left: 0;
}

.gis .tools {
    grid-template-columns: 43px;
}

.scientific {
    width: 85px;
}

.scientific .tools {
    grid-template-columns: 40px 38px;
}

.tool {
    display: flex;
    flex-direction: column;
    align-items: center;
    white-space: nowrap;
    line-height: 11px;
    color: #3a3a3a;
}

.tool svg {
    width: 20px;
    height: 20px;
    margin-bottom: 13px;
}

.tool.one svg {
    margin-bottom: 15px;
}

.tool.one .caret {
    margin-top: 4px;
}

.tool span .caret {
    margin-left: 1px;
    vertical-align: 3px;
}

.group-name {
    text-align: center;
    line-height: 15px;
    color: #70767c;
    letter-spacing: -0.15px;
    white-space: nowrap;
}

/* Work area */
.workspace {
    display: flex;
    height: 562px;
    flex: none;
    padding: 3px 2px 0 2px;
    background-color: #dfe3e6;
}

.side {
    display: flex;
    flex-direction: column;
    width: 150px;
    margin-right: 3px;
}

.panel {
    display: flex;
    flex-direction: column;
    border: 1px solid #9fa5aa;
    background-color: #fff;
}

.panel.contents {
    height: 288px;
    margin-bottom: 3px;
}

.panel.retriever {
    flex: 1;
}

.panel-head {
    display: flex;
    align-items: center;
    height: 19px;
    flex: none;
    padding: 0 4px 0 3px;
    gap: 4px;
    font-size: 10px;
    letter-spacing: -0.35px;
    background-color: #cdd4da;
    border-bottom: 1px solid #a7adb2;
}

.panel-head span {
    flex: 1;
}

.panel-head svg {
    width: 7px;
    height: 8px;
}

.tree {
    padding: 0 0 0 3px;
    font-size: 10px;
    letter-spacing: -0.3px;
}

.row {
    position: relative;
    display: flex;
    align-items: center;
    height: 15.300px;
    white-space: nowrap;
}

.row span {
    line-height: 13px;
    color: #222;
}

.exp {
    width: 6px;
    height: 6px;
    border: 1px solid #999;
    background: linear-gradient(#777, #777) center / 4px 1px no-repeat #fff;
}

.check {
    width: 9px;
    height: 9px;
    border: 1px solid #555;
    background-color: #f6f8f9;
    position: relative;
    flex: none;
}

.check.on::after {
    content: "";
    position: absolute;
    left: 2px;
    top: 0;
    width: 3px;
    height: 5px;
    border: solid #222;
    border-width: 0 1.500px 1.500px 0;
    transform: rotate(42deg);
}

.node {
    width: 10px;
    height: 10px;
    margin: 0 4px;
}

.lv0 .check {
    margin-left: 6px;
}

.lv0 .node {
    margin-left: 4px;
}

.lv1 {
    padding-left: 15px;
}

.lv1 .check {
    margin: 0 0 0 6px;
}

.selected {
    background-color: #3496e6;
}

.row .selected {
    color: #fff;
}

.lv2 {
    padding-left: 41px;
}

.lv2::before {
    content: "";
    position: absolute;
    left: 32px;
    top: -1px;
    width: 8px;
    height: 9px;
    border: dashed #a8a8a8;
    border-width: 0 0 1px 1px;
}

.lv2::after {
    content: "";
    position: absolute;
    left: 32px;
    top: 7px;
    height: 8px;
    border-left: 1px dashed #a8a8a8;
}

.lv2.last::after {
    display: none;
}

.bg {
    padding-left: 28px;
}

.bg .check {
    border-color: #999;
    margin-right: 6px;
    width: 8px;
    height: 8px;
}

.bg::before {
    content: "";
    position: absolute;
    left: 17px;
    bottom: 7px;
    width: 9px;
    height: 100px;
    border: dashed #a8a8a8;
    border-width: 0 0 1px 1px;
}

.swatch {
    width: 19px;
    height: 9px;
    border: 1px solid #444;
    margin: 0 3px 0 4px;
}

.black { background-color: #000; }
.blue { background-color: #0000f0; }
.green { background-color: #107010; }
.pink { background-color: #fcaebe; }
.cyan { background-color: #1cf4f0; }
.cream { background-color: #ffffe0; }

.viewer {
    flex: 1;
    display: flex;
    flex-direction: column;
}

.viewer-head {
    display: flex;
    align-items: center;
    gap: 3.5px;
    height: 19px;
    flex: none;
    padding: 0 2px 0 7px;
    background-color: #faee9c;
    color: #5c5638;
    letter-spacing: -0.18px;
}

.viewer-head span {
    flex: 1;
}

.viewer-head svg {
    width: 10px;
    height: 10px;
}

.viewer-head .v-small {
    width: 7px;
    height: 7px;
    margin: 0 1.500px;
}

.view {
    position: relative;
    flex: 1;
    overflow: hidden;
    background-color: #000;
}

#map {
    display: block;
}

.compass {
    position: absolute;
    left: 13.500px;
    top: 8px;
    width: 70px;
    height: 76px;
}

.activate {
    position: absolute;
    left: 881px;
    top: 509px;
    color: #8a8a8a;
    font-size: 16px;
    line-height: 20px;
    white-space: nowrap;
}

.activate p {
    margin: 1px 0 0;
    font-size: 11.500px;
    line-height: 18px;
    color: #777;
}

/* Accuracy Assessment window */
.dialog {
    position: absolute;
    left: 407px;
    top: 309px;
    width: 386px;
    height: 246px;
    display: flex;
    flex-direction: column;
    border-radius: 6px;
    overflow: hidden;
    background-color: #f0f0f0;
    color: #111;
}

.dlg-title {
    display: flex;
    align-items: center;
    height: 26px;
    flex: none;
    background-color: #eff4f7;
    padding-left: 6px;
    font-size: 10px;
    letter-spacing: -0.2px;
}

.dlg-title span {
    flex: 1;
    padding-left: 4px;
    white-space: nowrap;
}

.dlg-app {
    width: 14px;
    height: 14px;
}

.dlg-buttons {
    width: 90px;
    height: 20px;
    margin-right: 13px;
}

.dlg-menu {
    display: flex;
    height: 17px;
    flex: none;
    line-height: 17px;
    gap: 11.500px;
    padding-left: 6px;
    background-color: #fff;
    border-bottom: 1px solid #b8b8b8;
    font-size: 10px;
    letter-spacing: -0.3px;
}

.dlg-tools {
    display: flex;
    align-items: center;
    gap: 10px;
    height: 26px;
    flex: none;
    padding-left: 6px;
    border-bottom: 1px solid #bdbdbd;
}

.dlg-tools svg {
    width: 14px;
    height: 14px;
}

.dlg-body {
    display: flex;
    height: 158px;
    flex: none;
    padding-top: 1px;
    border-bottom: 2px solid #a6a6a6;
}

table {
    border-collapse: collapse;
    table-layout: fixed;
    width: 365px;
    height: 155px;
    font-family: "Liberation Sans", Arial, sans-serif;
    font-size: 10px;
    letter-spacing: -0.5px;
}

th {
    height: 22px;
    padding: 0;
    border: 1px solid #aeaeae;
    border-left: 0;
    background: linear-gradient(#fff, #e8e8e8 50%, #cfcfcf);
    font-weight: normal;
    letter-spacing: -0.2px;
}

.c-pt { width: 42px; }
.c-name { width: 52.500px; }
.c-x { width: 82.500px; }
.c-y { width: 82.500px; }
.c-class { width: 42.500px; }

th.c-ref {
    width: 63px;
    background: linear-gradient(#c8c8c8, #a6a6a6 60%, #909090);
    color: #dedede;
}

td {
    height: 13.300px;
    padding: 0;
    line-height: 11px;
    text-align: right;
    border: 1px solid #c4c4c4;
    background-color: #fff;
}

tr:nth-child(even) td {
    background-color: #efeffc;
}

tbody td:first-child,
tbody tr:nth-child(even) td:first-child {
    background-color: #efefef;
}

td:nth-child(2) {
    text-align: left;
    padding-left: 1px;
    letter-spacing: -0.3px;
}

tbody td:last-child,
tbody tr:nth-child(even) td:last-child {
    background-color: #a9ceec;
    border-color: #9dbdd6;
}

.table-edge {
    width: 5px;
    background-color: #adadad;
}

.scroll {
    flex: 1;
    background-color: #f3f3f3;
    border-left: 1px solid #fff;
}

.scroll i {
    display: block;
    width: 2px;
    height: 44px;
    margin: 15px 0 0 6px;
    background-color: #8b8b8b;
}

.dlg-status {
    display: flex;
    justify-content: space-between;
    flex: 1;
    padding: 0 3px 0 2px;
    line-height: 21px;
    font-size: 10px;
    letter-spacing: -0.35px;
}

.grip {
    align-self: flex-end;
    width: 7px;
    height: 7px;
    margin-bottom: 2px;
    background: radial-gradient(#b5b5b5 45%, transparent 50%) 0 0 / 2.500px 2.500px;
    clip-path: polygon(100% 0, 100% 100%, 0 100%);
}

.cursor {
    position: absolute;
    left: 775px;
    top: 386px;
    width: 10px;
    height: 14px;
}

/* Taskbar */
.taskbar {
    display: flex;
    height: 40px;
    flex: none;
    border-top: 1px solid #c6cbcc;
    background: linear-gradient(90deg, #e3e6e8, #dde3e5 35%, #e0e6e6 48%, #d5ede5 54%, #dfe6e7 62%, #e3e8ea);
}

.weather {
    display: flex;
    gap: 8px;
    width: 199.500px;
    padding: 6px 0 0 16px;
}

.weather svg {
    width: 19px;
    height: 19px;
    margin-top: 3px;
}

.weather div {
    display: flex;
    flex-direction: column;
    line-height: 13px;
}

.haze {
    color: #666;
}

.apps {
    display: grid;
    grid-template-columns: repeat(22, 36.700px);
}

.app {
    display: flex;
    flex-direction: column;
    align-items: center;
    height: 36px;
    margin: 3px 2px 0;
    padding-top: 6px;
    border-radius: 3px;
}

.app svg {
    width: 20px;
    height: 20px;
}

.app .wide {
    width: 24px;
    height: 24px;
    margin: -4px 0 0 4px;
}

.word { grid-column: 9; }
.zoom { grid-column: 13; }
.wps { grid-column: 15; }

.run::after {
    content: "";
    width: 5px;
    height: 3px;
    margin-top: 3px;
    border-radius: 2px;
    background-color: #858a8d;
}

.alert {
    background-color: #f9dfe4;
}

.alert::after {
    background-color: #c01828;
}

.current {
    background-color: #f4f6f7;
}

.current::after {
    width: 13px;
    background-color: #1f70c4;
}

.tray {
    display: grid;
    grid-template-columns: 27px 27px 27px 26px 22px 20px 20px;
    align-items: center;
    justify-items: center;
    margin-left: 10.500px;
}

.tray svg {
    width: 13px;
    height: 13px;
}

.clock {
    display: flex;
    flex-direction: column;
    align-items: flex-end;
    width: 58px;
    padding-top: 6px;
    line-height: 13px;
    color: #222;
}

.count {
    width: 13px;
    height: 13px;
    margin: 13px 0 0 6px;
    border-radius: 50%;
    background-color: #1478cc;
    color: #fff;
    line-height: 13px;
    text-align: center;
}
```
FILE: map.js
```js
// Classified raster, drawn pixel by pixel in window coordinates
const canvas = document.getElementById('map');
const ctx = canvas.getContext('2d');
const OX = 155, OY = 140;

let seed = 1234;
function rnd() {
    seed = (seed * 1664525 + 1013904223) >>> 0;
    return seed / 4294967296;
}

function shape(points) {
    const p = new Path2D();
    points.forEach(([x, y], i) => i ? p.lineTo(x - OX, y - OY) : p.moveTo(x - OX, y - OY));
    p.closePath();
    return p;
}

const colors = {
    g: [6, 112, 20],
    b: [14, 22, 200],
    c: [52, 205, 200],
    t: [20, 135, 130],
    p: [222, 176, 204],
    w: [200, 230, 225],
    d: [20, 60, 70]
};

// mix: class letters, the share of a letter is its weight
// zones inside an outline get a ragged edge of `soft` pixels
function fill(points, mix, outline, soft = 2) {
    const path = shape(points);
    const clip = outline ? shape(outline) : null;
    const xs = points.map(p => p[0]), ys = points.map(p => p[1]);
    for (let y = Math.min(...ys) - soft; y < Math.max(...ys) + soft; y++) {
        for (let x = Math.min(...xs) - soft; x < Math.max(...xs) + soft; x++) {
            const k = mix[Math.floor(rnd() * mix.length)];
            const jx = (rnd() - 0.5) * soft, jy = (rnd() - 0.5) * soft;
            const s = 0.85 + rnd() * 0.3;
            if (!ctx.isPointInPath(path, x - OX + jx, y - OY + jy)) continue;
            if (clip && !ctx.isPointInPath(clip, x - OX, y - OY)) continue;
            ctx.fillStyle = `rgb(${colors[k].map(v => Math.min(255, v * s)).join(',')})`;
            ctx.fillRect(x - OX, y - OY, 1, 1);
        }
    }
}

const north = [[727,141],[740,141],[745,155],[746,163],[752,175],[760,176],[772,183],[785,184],[786,196],[793,215],[803,245],[810,275],[814,290],[813,305],[805,315],[795,322],[790,312],[690,312],[686,308],[692,302],[714,306],[716,290],[728,284],[732,275],[727,260],[729,250],[727,235],[727,222],[722,205],[720,192],[723,180],[717,172],[722,163],[726,150]];
const east = [[790,357],[806,362],[807,385],[803,400],[815,430],[829,470],[826,478],[812,480],[800,486],[790,487]];
const south = [[605,554],[793,554],[785,560],[776,578],[765,587],[736,588],[732,592],[736,600],[734,618],[732,640],[737,650],[744,663],[741,674],[735,680],[685,680],[683,668],[672,660],[668,665],[672,652],[662,648],[650,644],[645,650],[639,657],[630,642],[625,620],[620,605],[616,602],[606,600],[607,575],[612,567]];

fill(north, 'gggggbbctttcwd');
fill([[727,141],[740,141],[746,165],[752,178],[745,190],[728,190],[727,164]], 'bbbbggttcd', north, 6);
fill([[754,185],[784,186],[788,204],[776,225],[772,240],[768,270],[752,262],[746,215]], 'bbbbggggtttc', north, 12);
fill([[757,215],[768,205],[778,240],[766,256],[757,245]], 'bbbbbbggt', north, 10);
fill([[732,170],[748,178],[752,198],[735,202]], 'gggggggbct', north, 8);
fill([[752,176],[762,178],[765,188],[754,190]], 'gggggct', north, 5);
fill([[787,206],[794,218],[803,248],[812,285],[803,290],[790,275],[780,285],[774,278],[779,252],[778,225]], 'gggggggggggggggggggt', north, 5);
fill([[755,265],[768,270],[773,295],[753,296]], 'ggggggggbtt', north, 8);
fill([[728,215],[740,215],[742,240],[728,235]], 'bbwwctgp', north, 8);
fill([[746,230],[751,232],[755,305],[749,305]], 'ggwpctdb', north, 5);
fill([[768,275],[778,278],[786,305],[774,305]], 'bbggttc', north, 6);
fill([[718,284],[742,280],[750,312],[716,312]], 'ccttggwgd', north, 8);
fill([[767,246],[782,247],[782,249],[767,248]], 'cccw', north, 1);
fill([[756,300],[772,300],[772,312],[756,312]], 'pwbcgttd', north, 6);
fill([[790,290],[814,285],[812,306],[800,318],[788,312]], 'gggttcwbd', north, 8);
fill([[686,308],[694,301],[714,306],[714,312],[690,312]], 'wpwtdd', north, 2);

fill(east, 'ppbbwccggddt');
fill([[792,358],[806,363],[806,395],[797,402]], 'cctggbpd', east, 6);
fill([[790,462],[806,466],[816,480],[800,487],[790,487]], 'gggctd', east, 6);
fill([[790,531],[796,530],[800,538],[799,550],[790,554]], 'ggggggggt');

fill(south, 'tttccppwbbdgdd');
fill([[607,562],[622,560],[628,600],[606,600]], 'ccctttwbdd', south, 8);
fill([[624,604],[655,594],[668,632],[632,645]], 'ppwwttbdgdd', south, 12);
fill([[680,555],[712,555],[706,640],[682,640]], 'cctwttbgdd', south, 12);
fill([[718,555],[756,555],[752,580],[718,585]], 'gggggggctttb', south, 6);
fill([[738,572],[756,570],[756,588],[734,588]], 'ggggggggct', south, 4);
fill([[714,590],[734,588],[737,602],[733,640],[744,663],[735,680],[708,680],[706,640]], 'ggggggggggggct', south, 6);
fill([[700,585],[708,575],[708,640],[706,660],[701,630]], 'pwbbdpcg', south, 5);
fill([[755,556],[772,556],[768,586],[755,584]], 'bbpwttcgd', south, 4);
fill([[770,555],[782,555],[776,570],[774,576],[767,573]], 'bbbbbbbbbb', south, 2);
```
